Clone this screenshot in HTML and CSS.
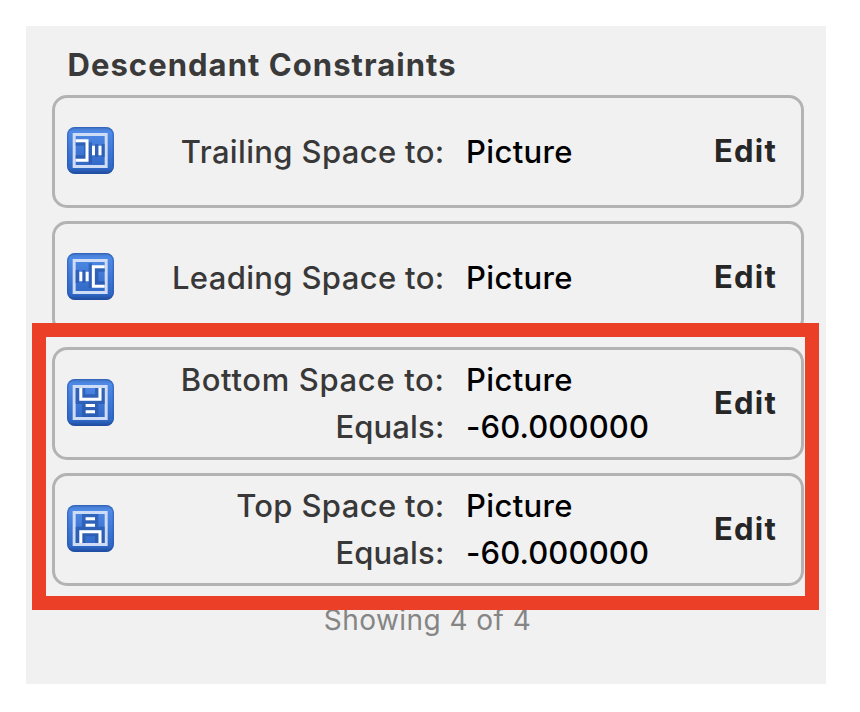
FILE: index.html
```html
<!DOCTYPE html>
<html lang="en">
<head>
<meta charset="utf-8">
<title>Descendant Constraints</title>
<link rel="stylesheet" href="styles.css">
</head>
<body>
<svg class="defs" width="0" height="0" aria-hidden="true">
  <defs>
    <linearGradient id="tile" x1="0" y1="0" x2="0" y2="1">
      <stop offset="0" stop-color="#4376c5"/>
      <stop offset=".1" stop-color="#4f8ae6"/>
      <stop offset=".5" stop-color="#3f77d6"/>
      <stop offset=".88" stop-color="#2f67c5"/>
      <stop offset="1" stop-color="#1f4b9c"/>
    </linearGradient>
    <g id="base">
      <rect x="22" y="21" width="141" height="141" rx="24" fill="url(#tile)"/>
      <rect x="24" y="23" width="137" height="137" rx="22" fill="none" stroke="#1f50a8" stroke-opacity=".45" stroke-width="4"/>
      <rect x="43.5" y="43.5" width="96" height="96" fill="none" stroke="#cfdcf5" stroke-width="9"/>
    </g>
  </defs>
</svg>
<main class="panel">
  <h1 class="title">Descendant Constraints</h1>
  <div class="list">
    <section class="card">
      <svg class="icon" viewBox="22 21 141 141"><use href="#base"/>
        <path class="shade" d="M48 72H78V111H48M92 67V131M111 72V111M130 72V111"/>
        <path class="glyph" d="M48 62H82V121H48M101.500 77V106M121 77V106"/>
      </svg>
      <dl class="fields"><dt class="trailing">Trailing Space to:</dt><dd class="pic">Picture</dd></dl>
      <button class="edit">Edit</button>
    </section>
    <section class="card">
      <svg class="icon" viewBox="22 21 141 141"><use href="#base"/>
        <path class="shade" d="M135 72H111V111H135M92 52V126M72 72V111M53 72V111"/>
        <path class="glyph" d="M135 62H101V121H135M63.500 77V106M82.500 77V106"/>
      </svg>
      <dl class="fields"><dt class="leading">Leading Space to:</dt><dd class="pic">Picture</dd></dl>
      <button class="edit">Edit</button>
    </section>
    <section class="card">
      <svg class="icon" viewBox="22 21 141 141"><use href="#base"/>
        <path class="shade" d="M53 48V91H130V48M72 48V72H111V48M72 91V130H111V91M72 110H111"/>
        <path class="glyph" d="M63.500 48V82H121V48M78 100.500H106M78 119.500H106"/>
      </svg>
      <dl class="fields"><dt class="bottom">Bottom Space to:</dt><dd class="pic">Picture</dd><dt class="equals">Equals:</dt><dd class="num">-60.000000</dd></dl>
      <button class="edit">Edit</button>
    </section>
    <section class="card">
      <svg class="icon" viewBox="22 21 141 141"><use href="#base"/>
        <path class="shade" d="M53 135V91H130V135M72 135V110H111V135M72 91V53H111V91M72 72H111"/>
        <path class="glyph" d="M63.500 135V101H121V135M78 62.500H106M78 81.500H106"/>
      </svg>
      <dl class="fields"><dt class="top">Top Space to:</dt><dd class="pic">Picture</dd><dt class="equals">Equals:</dt><dd class="num">-60.000000</dd></dl>
      <button class="edit">Edit</button>
    </section>
    <div class="highlight"></div>
  </div>
  <p class="count">Showing 4 of 4</p>
</main>
</body>
</html>
```
FILE: styles.css
```css
* { box-sizing: border-box; }
body {
  margin: 0;
  padding: 26px;
  background: #fff;
  font-family: Inter, "Liberation Sans", sans-serif;
}
.defs { display: block; }
.panel {
  width: 800px;
  height: 658px;
  padding: 19px 22.5px 0 25.5px;
  background: #f1f1f1;
}
.title {
  margin: 0 0 10.4px 16px;
  font-size: 31px;
  line-height: 40px;
  font-weight: 700;
  letter-spacing: 1.05px;
  color: #3a3a3a;
  white-space: nowrap;
}
.list {
  position: relative;
  display: flex;
  flex-direction: column;
  gap: 13px;
}
.card {
  display: flex;
  align-items: center;
  height: 113px;
  padding: 0 23.500px 0 12.4px;
  border: 3px solid #b3b3b3;
  border-radius: 15px;
}
.icon {
  flex: none;
  width: 47px;
  height: 47px;
  margin-bottom: 2px;
}
.shade { fill: none; stroke: #2857a8; stroke-opacity: .7; stroke-width: 10; }
.glyph { fill: none; stroke: #fff; stroke-width: 9; }
.fields {
  flex: 1;
  display: grid;
  grid-template-columns: 330.6px 1fr;
  column-gap: 21.500px;
  margin: 0 0 1px;
  font-size: 31px;
  font-weight: 450;
  line-height: 47px;
  letter-spacing: .35px;
  white-space: nowrap;
}
.fields dt { text-align: right; color: #383838; }
.fields dd { margin: 0; color: #000; }
.fields .bottom { letter-spacing: .65px; }
.fields .equals, .fields .num { letter-spacing: .15px; }
.edit {
  margin: 0 0 2px;
  padding: 0;
  border: 0;
  background: none;
  font: 700 31px/40px Inter, "Liberation Sans", sans-serif;
  letter-spacing: 1.2px;
  color: #262626;
}
.highlight {
  position: absolute;
  left: -19.5px;
  top: 228px;
  width: 787px;
  height: 287px;
  border: 14px solid #ec3f27;
}
.count {
  margin: 16px 0 0;
  font-size: 28px;
  line-height: 36px;
  letter-spacing: .45px;
  text-align: center;
  color: #858585;
}
```
